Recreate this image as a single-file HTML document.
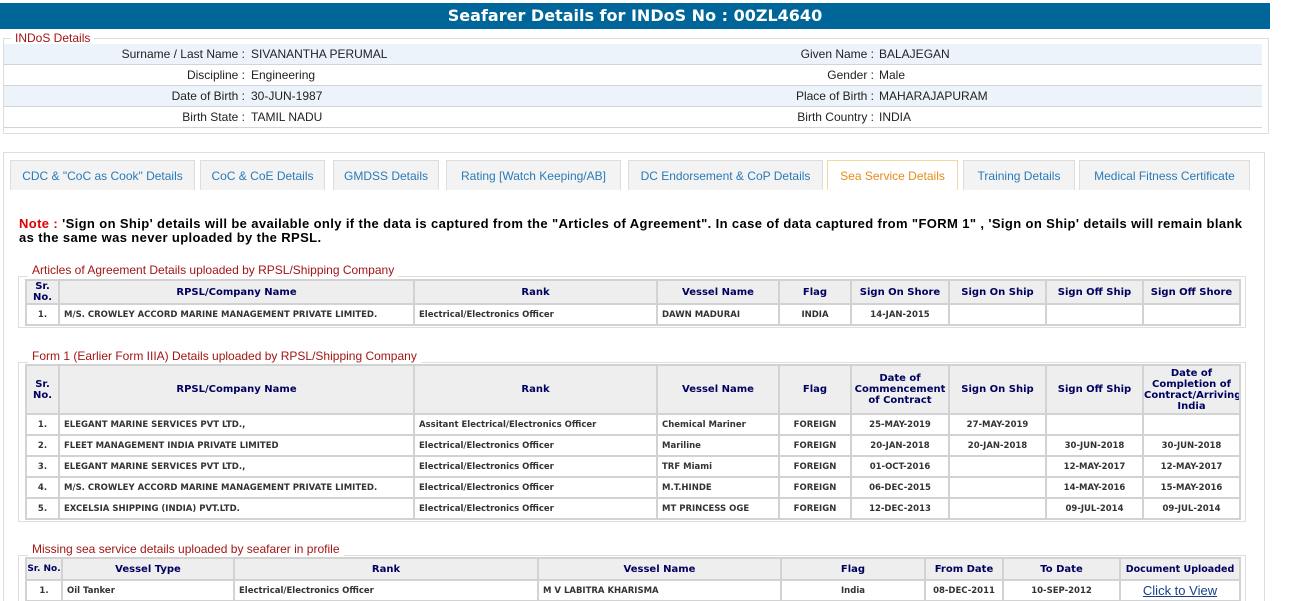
<!DOCTYPE html>
<html><head><meta charset="utf-8">
<style>
*{margin:0;padding:0;box-sizing:border-box}
html,body{width:1296px;height:601px;overflow:hidden}
body{background:#fff;position:relative;font-family:"Liberation Sans",Arial,sans-serif}
.hdr{position:absolute;left:0;top:3px;width:1270px;height:26px;background:#00669a;color:#fff;font:bold 16px "DejaVu Sans",sans-serif;text-align:center;line-height:26px}
.fs{position:absolute;border:1px solid #dedede}
.lg{position:absolute;background:#fff;color:#a31515;font-size:12px;padding:0 4px;line-height:13px;white-space:nowrap}
.row{position:absolute;left:4px;width:1258px;height:21px;border-bottom:1px solid #d4d4d4;font-size:12px;line-height:20px;color:#222}
.row.a{background:#edf3fa}
.row span{position:absolute;white-space:nowrap}
.l{text-align:right}
.tab{position:absolute;top:160px;height:30px;background:#f3f3f3;border:1px solid #ddd;border-bottom:none;color:#2a7ab8;font-size:12px;line-height:30px;text-align:center;white-space:nowrap}
.tab.on{background:#fff;color:#e88a1a;border-color:#f0d9a0}
.note{position:absolute;left:19px;top:217px;font:bold 13px "Liberation Sans",sans-serif;line-height:14px;color:#000;white-space:nowrap;letter-spacing:0.38px}
table{position:absolute;left:25px;border-collapse:collapse;table-layout:fixed;font-family:"DejaVu Sans",sans-serif}
td,th{border:2px solid #d2d2d2;padding:0 4px;white-space:nowrap;overflow:hidden}
th{background:#eee;color:#000060;font-size:10px;font-weight:bold;text-align:center;line-height:11px}
td{font-size:8.5px;font-weight:bold;color:#333;height:21px}
td.c{text-align:center}
a{color:#1a3f8a;font:13px "Liberation Sans",sans-serif;text-decoration:underline}
</style></head><body>
<div class="hdr">Seafarer Details for INDoS No : 00ZL4640</div>

<div class="fs" style="left:3px;top:38px;width:1266px;height:96px"></div>
<div class="lg" style="left:11px;top:32px">INDoS Details</div>
<div class="row a" style="top:44px"><span class="l" style="right:1017px">Surname / Last Name :</span><span style="left:247px">SIVANANTHA PERUMAL</span><span class="l" style="right:388px">Given Name :</span><span style="left:875px">BALAJEGAN</span></div>
<div class="row" style="top:65px"><span class="l" style="right:1017px">Discipline :</span><span style="left:247px">Engineering</span><span class="l" style="right:388px">Gender :</span><span style="left:875px">Male</span></div>
<div class="row a" style="top:86px"><span class="l" style="right:1017px">Date of Birth :</span><span style="left:247px">30-JUN-1987</span><span class="l" style="right:388px">Place of Birth :</span><span style="left:875px">MAHARAJAPURAM</span></div>
<div class="row" style="top:107px"><span class="l" style="right:1017px">Birth State :</span><span style="left:247px">TAMIL NADU</span><span class="l" style="right:388px">Birth Country :</span><span style="left:875px">INDIA</span></div>

<div class="fs" style="left:3px;top:152px;width:1262px;height:460px"></div>
<div class="tab" style="left:10px;width:185px">CDC &amp; "CoC as Cook" Details</div>
<div class="tab" style="left:200px;width:125px">CoC &amp; CoE Details</div>
<div class="tab" style="left:333px;width:106px">GMDSS Details</div>
<div class="tab" style="left:446px;width:175px">Rating [Watch Keeping/AB]</div>
<div class="tab" style="left:628px;width:195px">DC Endorsement &amp; CoP Details</div>
<div class="tab on" style="left:827px;width:131px">Sea Service Details</div>
<div class="tab" style="left:963px;width:112px">Training Details</div>
<div class="tab" style="left:1079px;width:171px">Medical Fitness Certificate</div>

<div class="note"><span style="color:#e00000">Note :</span> 'Sign on Ship' details will be available only if the data is captured from the "Articles of Agreement". In case of data captured from "FORM 1" , 'Sign on Ship' details will remain blank<br>as the same was never uploaded by the RPSL.</div>

<div class="fs" style="left:18px;top:276px;width:1228px;height:52px"></div>
<div class="lg" style="left:28px;top:264px">Articles of Agreement Details uploaded by RPSL/Shipping Company</div>
<table style="top:279px;width:1214px">
<colgroup><col style="width:33px"><col style="width:355px"><col style="width:243px"><col style="width:122px"><col style="width:72px"><col style="width:98px"><col style="width:97px"><col style="width:97px"><col style="width:97px"></colgroup>
<tr style="height:24px"><th>Sr.<br>No.</th><th>RPSL/Company Name</th><th>Rank</th><th>Vessel Name</th><th>Flag</th><th>Sign On Shore</th><th>Sign On Ship</th><th>Sign Off Ship</th><th>Sign Off Shore</th></tr>
<tr><td class="c">1.</td><td>M/S. CROWLEY ACCORD MARINE MANAGEMENT PRIVATE LIMITED.</td><td>Electrical/Electronics Officer</td><td>DAWN MADURAI</td><td class="c">INDIA</td><td class="c">14-JAN-2015</td><td></td><td></td><td></td></tr>
</table>

<div class="fs" style="left:18px;top:362px;width:1228px;height:160px"></div>
<div class="lg" style="left:28px;top:350px">Form 1 (Earlier Form IIIA) Details uploaded by RPSL/Shipping Company</div>
<table style="top:364px;width:1214px">
<colgroup><col style="width:33px"><col style="width:355px"><col style="width:243px"><col style="width:122px"><col style="width:72px"><col style="width:98px"><col style="width:97px"><col style="width:97px"><col style="width:97px"></colgroup>
<tr style="height:49px"><th>Sr.<br>No.</th><th>RPSL/Company Name</th><th>Rank</th><th>Vessel Name</th><th>Flag</th><th style="padding:0">Date of<br>Commencement<br>of Contract</th><th>Sign On Ship</th><th>Sign Off Ship</th><th style="padding:0">Date of<br>Completion of<br>Contract/Arriving<br>India</th></tr>
<tr><td class="c">1.</td><td>ELEGANT MARINE SERVICES PVT LTD.,</td><td>Assitant Electrical/Electronics Officer</td><td>Chemical Mariner</td><td class="c">FOREIGN</td><td class="c">25-MAY-2019</td><td class="c">27-MAY-2019</td><td></td><td></td></tr>
<tr><td class="c">2.</td><td>FLEET MANAGEMENT INDIA PRIVATE LIMITED</td><td>Electrical/Electronics Officer</td><td>Mariline</td><td class="c">FOREIGN</td><td class="c">20-JAN-2018</td><td class="c">20-JAN-2018</td><td class="c">30-JUN-2018</td><td class="c">30-JUN-2018</td></tr>
<tr><td class="c">3.</td><td>ELEGANT MARINE SERVICES PVT LTD.,</td><td>Electrical/Electronics Officer</td><td>TRF Miami</td><td class="c">FOREIGN</td><td class="c">01-OCT-2016</td><td></td><td class="c">12-MAY-2017</td><td class="c">12-MAY-2017</td></tr>
<tr><td class="c">4.</td><td>M/S. CROWLEY ACCORD MARINE MANAGEMENT PRIVATE LIMITED.</td><td>Electrical/Electronics Officer</td><td>M.T.HINDE</td><td class="c">FOREIGN</td><td class="c">06-DEC-2015</td><td></td><td class="c">14-MAY-2016</td><td class="c">15-MAY-2016</td></tr>
<tr><td class="c">5.</td><td>EXCELSIA SHIPPING (INDIA) PVT.LTD.</td><td>Electrical/Electronics Officer</td><td>MT PRINCESS OGE</td><td class="c">FOREIGN</td><td class="c">12-DEC-2013</td><td></td><td class="c">09-JUL-2014</td><td class="c">09-JUL-2014</td></tr>
</table>

<div class="fs" style="left:18px;top:555px;width:1228px;height:60px"></div>
<div class="lg" style="left:28px;top:543px">Missing sea service details uploaded by seafarer in profile</div>
<table style="top:557px;width:1214px">
<colgroup><col style="width:36px"><col style="width:172px"><col style="width:304px"><col style="width:243px"><col style="width:144px"><col style="width:78px"><col style="width:117px"><col style="width:120px"></colgroup>
<tr style="height:22px"><th style="padding:0;font-size:9px">Sr. No.</th><th>Vessel Type</th><th>Rank</th><th>Vessel Name</th><th>Flag</th><th>From Date</th><th>To Date</th><th style="padding:0;font-size:9.5px">Document Uploaded</th></tr>
<tr><td class="c">1.</td><td>Oil Tanker</td><td>Electrical/Electronics Officer</td><td>M V LABITRA KHARISMA</td><td class="c">India</td><td class="c">08-DEC-2011</td><td class="c">10-SEP-2012</td><td class="c"><a>Click to View</a></td></tr>
</table>
</body></html>
